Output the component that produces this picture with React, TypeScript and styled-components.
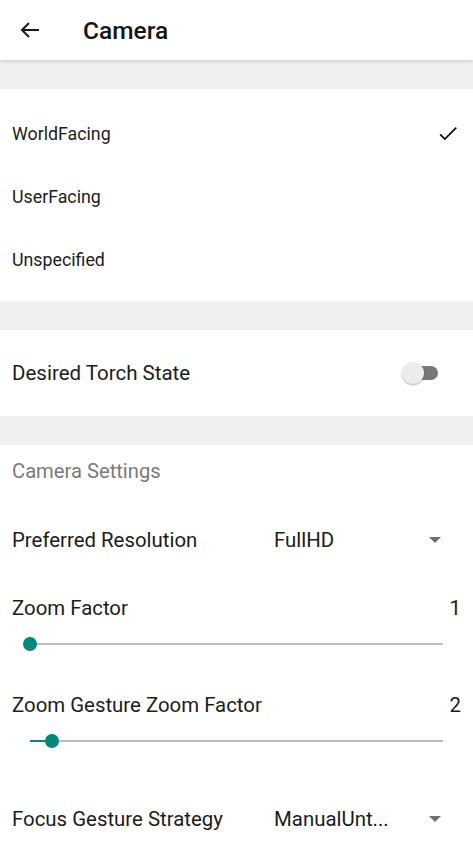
import React from "react";
import styled, { createGlobalStyle } from "styled-components";

const Global = createGlobalStyle`
  html, body { margin: 0; padding: 0; background: #f0f0f0; }
  body { font-family: Roboto, "Noto Sans", sans-serif; color: #1c1c1c; }
  * { box-sizing: border-box; }
`;

const Page = styled.div`
  width: 473px;
  height: 841px;
  overflow: hidden;
  background: #f0f0f0;
  display: flex;
  flex-direction: column;
`;

const Header = styled.header`
  height: 60px;
  background: #fff;
  display: flex;
  align-items: center;
  padding-left: 18px;
  gap: 41px;
  box-shadow: 0 1px 4px rgba(0, 0, 0, 0.18);
  position: relative;
  z-index: 1;
  flex-shrink: 0;
`;

const Title = styled.h1`
  margin: 0;
  font-size: 24.5px;
  font-weight: 500;
  color: #151515;
`;

const Section = styled.section<{ $grow?: boolean }>`
  background: #fff;
  margin-top: 29px;
  display: flex;
  flex-direction: column;
  flex-shrink: 0;
  flex-grow: ${(p) => (p.$grow ? 1 : 0)};
`;

const OptionList = styled.div`
  display: flex;
  flex-direction: column;
  padding: 13px 0 10px;
`;

const OptionRow = styled.div`
  height: 63px;
  display: flex;
  align-items: center;
  justify-content: space-between;
  padding: 0 14px 0 12px;
  font-size: 17.8px;
  color: #1c1c1c;
`;

const ToggleRow = styled.div`
  height: 86px;
  display: flex;
  align-items: center;
  justify-content: space-between;
  padding: 0 35px 0 12px;
  font-size: 20.5px;
`;

const Switch = styled.div`
  position: relative;
  width: 38px;
  height: 22px;
  display: flex;
  align-items: center;
`;

const Track = styled.div`
  margin-left: 4px;
  width: 34px;
  height: 14px;
  border-radius: 7px;
  background: #777;
`;

const Thumb = styled.div`
  position: absolute;
  left: 2px;
  top: 0;
  width: 22px;
  height: 22px;
  border-radius: 50%;
  background: #ececec;
  box-shadow: 0 1px 2px rgba(0, 0, 0, 0.3);
`;

const SectionLabel = styled.div`
  height: 52px;
  display: flex;
  align-items: center;
  padding: 0 12px;
  font-size: 20.2px;
  color: #7a7a7a;
`;

const SelectRow = styled.div<{ $height: number }>`
  height: ${(p) => p.$height}px;
  display: grid;
  grid-template-columns: 262px 1fr 20px;
  align-items: center;
  padding: 0 32px 0 12px;
  font-size: 20.4px;
`;

const SelectValue = styled.span`
  color: #1c1c1c;
`;

const Caret = styled.span`
  width: 0;
  height: 0;
  border-left: 6px solid transparent;
  border-right: 6px solid transparent;
  border-top: 6px solid #6f6f6f;
  justify-self: end;
`;

const SliderBlock = styled.div<{ $top: number }>`
  display: flex;
  flex-direction: column;
  padding: ${(p) => p.$top}px 12px 0 12px;
`;

const SliderHead = styled.div`
  display: flex;
  justify-content: space-between;
  align-items: center;
  height: 24px;
  font-size: 20.4px;
`;

const TrackWrap = styled.div`
  position: relative;
  margin: 17px 18px 0 18px;
  height: 14px;
  display: flex;
  align-items: center;
`;

const SliderTrack = styled.div`
  width: 100%;
  height: 2px;
  background: #bdbdbd;
`;

const SliderActive = styled.div`
  position: absolute;
  left: 0;
  top: 6px;
  height: 2px;
  background: #00897b;
`;

const SliderThumb = styled.div`
  position: absolute;
  top: 0;
  width: 14px;
  height: 14px;
  margin-left: -7px;
  border-radius: 50%;
  background: #00897b;
`;

const Slider = ({ value, label, frac }: { value: string; label: string; frac: number }) => (
  <>
    <SliderHead>
      <span>{label}</span>
      <span>{value}</span>
    </SliderHead>
    <TrackWrap>
      <SliderTrack />
      <SliderActive style={{ width: `${frac * 100}%` }} />
      <SliderThumb style={{ left: `${frac * 100}%` }} />
    </TrackWrap>
  </>
);

export default function App() {
  return (
    <Page>
      <Global />
      <Header>
        <svg width="24" height="24" viewBox="0 0 24 24" fill="none" stroke="#1a1a1a" strokeWidth="2" strokeLinecap="square">
          <path d="M20 12H5" />
          <path d="M11 5l-7 7 7 7" strokeLinecap="butt" />
        </svg>
        <Title>Camera</Title>
      </Header>
      <Section>
        <OptionList>
          <OptionRow>
            <span>WorldFacing</span>
            <svg width="22" height="22" viewBox="0 0 24 24" fill="none" stroke="#111" strokeWidth="2">
              <path d="M3.5 12.5l5 5L21 5" />
            </svg>
          </OptionRow>
          <OptionRow>UserFacing</OptionRow>
          <OptionRow>Unspecified</OptionRow>
        </OptionList>
      </Section>
      <Section>
        <ToggleRow>
          <span>Desired Torch State</span>
          <Switch>
            <Track />
            <Thumb />
          </Switch>
        </ToggleRow>
      </Section>
      <Section $grow>
        <SectionLabel>Camera Settings</SectionLabel>
        <SelectRow $height={86}>
          <span>Preferred Resolution</span>
          <SelectValue>FullHD</SelectValue>
          <Caret />
        </SelectRow>
        <SliderBlock $top={13}>
          <Slider label="Zoom Factor" value="1" frac={0} />
        </SliderBlock>
        <SliderBlock $top={42}>
          <Slider label="Zoom Gesture Zoom Factor" value="2" frac={0.053} />
        </SliderBlock>
        <SelectRow $height={142}>
          <span>Focus Gesture Strategy</span>
          <SelectValue>ManualUnt...</SelectValue>
          <Caret />
        </SelectRow>
      </Section>
    </Page>
  );
}
